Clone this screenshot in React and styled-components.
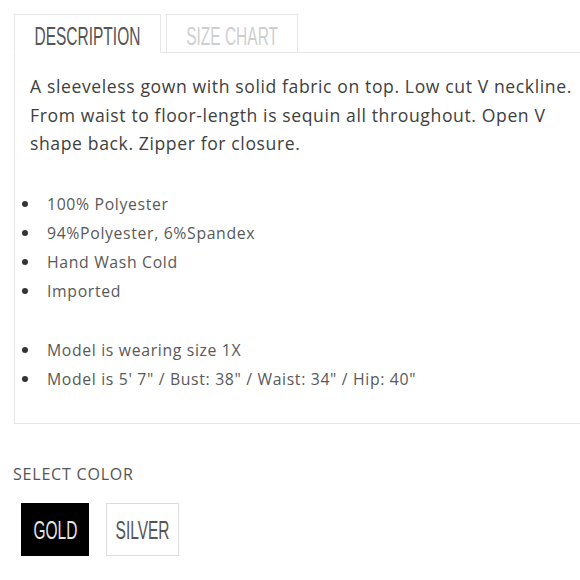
import React from "react";
import styled, { createGlobalStyle } from "styled-components";

const GlobalStyle = createGlobalStyle`
  html, body {
    margin: 0;
    padding: 0;
    background: #ffffff;
  }
  body {
    font-family: "Open Sans", "Noto Sans", sans-serif;
  }
`;

const features = [
  ["100% Polyester", "94%Polyester, 6%Spandex", "Hand Wash Cold", "Imported"],
  ["Model is wearing size 1X", "Model is 5' 7\" / Bust: 38\" / Waist: 34\" / Hip: 40\""],
];

const tabs = [
  { label: "DESCRIPTION", width: 147 },
  { label: "SIZE CHART", width: 132 },
];

const colors = [
  { label: "GOLD", width: 68 },
  { label: "SILVER", width: 73 },
];

export default function App() {
  const [tab, setTab] = React.useState(0);
  const [color, setColor] = React.useState(0);

  return (
    <Page>
      <GlobalStyle />
      <Tabs>
        {tabs.map((t, i) => (
          <Tab key={t.label} width={t.width} active={tab === i} onClick={() => setTab(i)}>
            <Condensed>{t.label}</Condensed>
          </Tab>
        ))}
      </Tabs>
      <Panel>
        <Intro>
          A sleeveless gown with solid fabric on top. Low cut V neckline.
          <br />
          From waist to floor-length is sequin all throughout. Open V
          <br />
          shape back. Zipper for closure.
        </Intro>
        {features.map((group, i) => (
          <List key={i}>
            {group.map((item) => (
              <Item key={item}>{item}</Item>
            ))}
          </List>
        ))}
      </Panel>
      <ColorLabel>SELECT COLOR</ColorLabel>
      <Swatches>
        {colors.map((c, i) => (
          <Swatch key={c.label} width={c.width} selected={color === i} onClick={() => setColor(i)}>
            <Condensed>{c.label}</Condensed>
          </Swatch>
        ))}
      </Swatches>
    </Page>
  );
}

const Page = styled.div`
  width: 580px;
  height: 580px;
  overflow: hidden;
  padding: 14px 0 0 14px;
  box-sizing: border-box;
`;

const Tabs = styled.div`
  display: flex;
  gap: 5px;
  position: relative;
  z-index: 2;
`;

const Condensed = styled.span`
  display: inline-block;
  font-family: "Liberation Sans", Arial, sans-serif;
  font-size: 25px;
  line-height: 1;
  white-space: nowrap;
  transform: scaleX(0.62);
  transform-origin: center;
`;

const Tab = styled.div`
  width: ${(p) => p.width}px;
  height: 39px;
  padding-top: 5px;
  box-sizing: border-box;
  display: flex;
  align-items: center;
  justify-content: center;
  border: 1px solid #e6e6e6;
  border-bottom: 1px solid ${(p) => (p.active ? "#ffffff" : "#e6e6e6")};
  background: #ffffff;
  color: ${(p) => (p.active ? "#555555" : "#cfcfcf")};
  cursor: pointer;
  margin-bottom: -1px;
`;

const Panel = styled.div`
  border: 1px solid #e6e6e6;
  border-right: none;
  padding: 19px 0 29px 15px;
  box-sizing: border-box;
`;

const Intro = styled.p`
  margin: 0 0 32px;
  font-size: 17.6px;
  letter-spacing: 0.6px;
  line-height: 28.5px;
  color: #404040;
  white-space: nowrap;
`;

const List = styled.ul`
  margin: 0 0 30px;
  padding: 0 0 0 17px;
  list-style: none;
  &:last-child {
    margin-bottom: 0;
  }
`;

const Item = styled.li`
  position: relative;
  font-size: 15.8px;
  letter-spacing: 0.65px;
  line-height: 29px;
  color: #595959;
  &::before {
    content: "";
    position: absolute;
    left: -25px;
    top: 11px;
    width: 6px;
    height: 6px;
    border-radius: 50%;
    background: #333333;
  }
`;

const ColorLabel = styled.div`
  margin: 40px 0 0 -1px;
  font-size: 16px;
  letter-spacing: 0.8px;
  line-height: 20px;
  color: #555555;
`;

const Swatches = styled.div`
  display: flex;
  gap: 17px;
  margin: 19px 0 0 7px;
`;

const Swatch = styled.div`
  width: ${(p) => p.width}px;
  height: 53px;
  padding-top: 3px;
  box-sizing: border-box;
  display: flex;
  align-items: center;
  justify-content: center;
  border: 1px solid ${(p) => (p.selected ? "#000000" : "#dcdcdc")};
  background: ${(p) => (p.selected ? "#000000" : "#ffffff")};
  color: ${(p) => (p.selected ? "#e6e6e6" : "#555555")};
  cursor: pointer;
`;
